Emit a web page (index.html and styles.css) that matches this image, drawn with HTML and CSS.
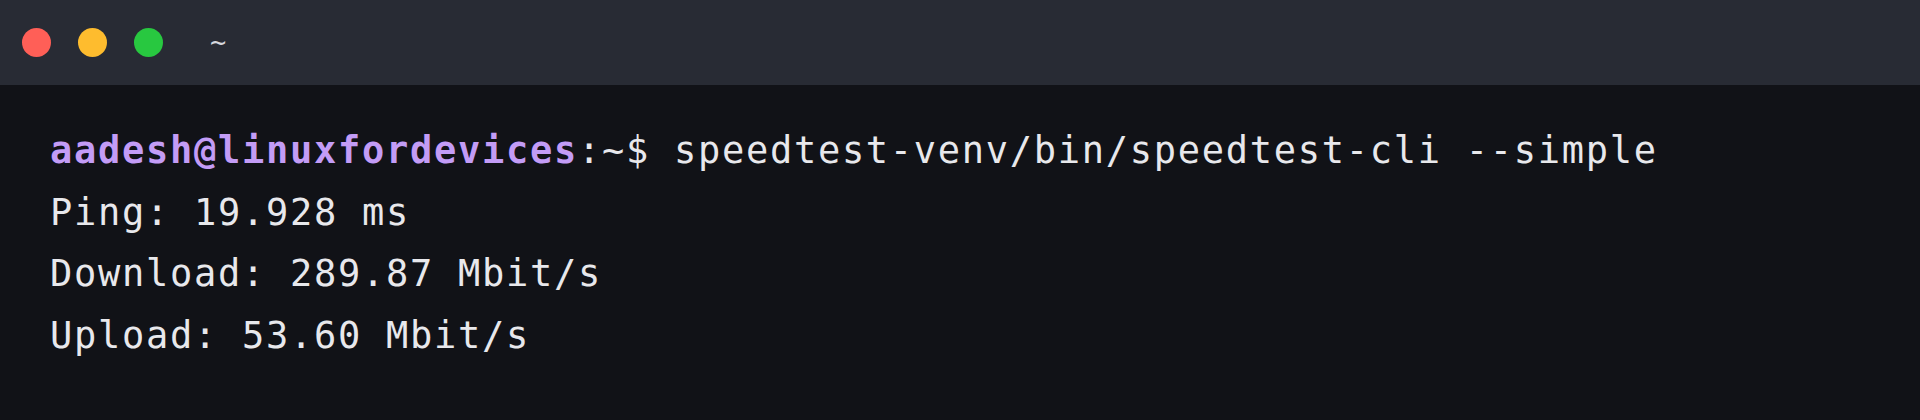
FILE: index.html
```html
<!DOCTYPE html>
<html>
<head>
<meta charset="utf-8">
<link rel="stylesheet" href="styles.css">
</head>
<body>
<div class="window">
  <div class="titlebar">
    <div class="lights">
      <span class="dot red"></span>
      <span class="dot yellow"></span>
      <span class="dot green"></span>
    </div>
    <span class="title">~</span>
  </div>
  <div class="terminal">
    <div class="line"><span class="prompt">aadesh@linuxfordevices</span>:~$ speedtest-venv/bin/speedtest-cli --simple</div>
    <div class="line">Ping: 19.928 ms</div>
    <div class="line">Download: 289.87 Mbit/s</div>
    <div class="line">Upload: 53.60 Mbit/s</div>
  </div>
</div>
</body>
</html>
```
FILE: styles.css
```css
html, body {
  margin: 0;
  padding: 0;
  background: #111217;
}
.window {
  width: 1920px;
  height: 420px;
  display: flex;
  flex-direction: column;
  background: #111217;
}
.titlebar {
  height: 85px;
  flex: none;
  background: #282b34;
  display: flex;
  align-items: center;
  padding-left: 22px;
  box-sizing: border-box;
}
.lights {
  display: flex;
  gap: 27px;
}
.dot {
  width: 29px;
  height: 29px;
  border-radius: 50%;
  display: block;
}
.red { background: #ff5f57; }
.yellow { background: #febc2e; }
.green { background: #28c840; }
.title {
  margin-left: 47px;
  color: #d6d8de;
  font-family: "DejaVu Sans Mono", monospace;
  font-size: 27px;
  line-height: 1;
  margin-top: -2px;
}
.terminal {
  padding: 35px 0 0 50px;
  font-family: "DejaVu Sans Mono", monospace;
  font-size: 37px;
  letter-spacing: 1.72px;
  line-height: 61.7px;
  color: #e8e8ec;
}
.line {
  white-space: pre;
}
.prompt {
  color: #c39cf6;
  font-weight: bold;
}
```
